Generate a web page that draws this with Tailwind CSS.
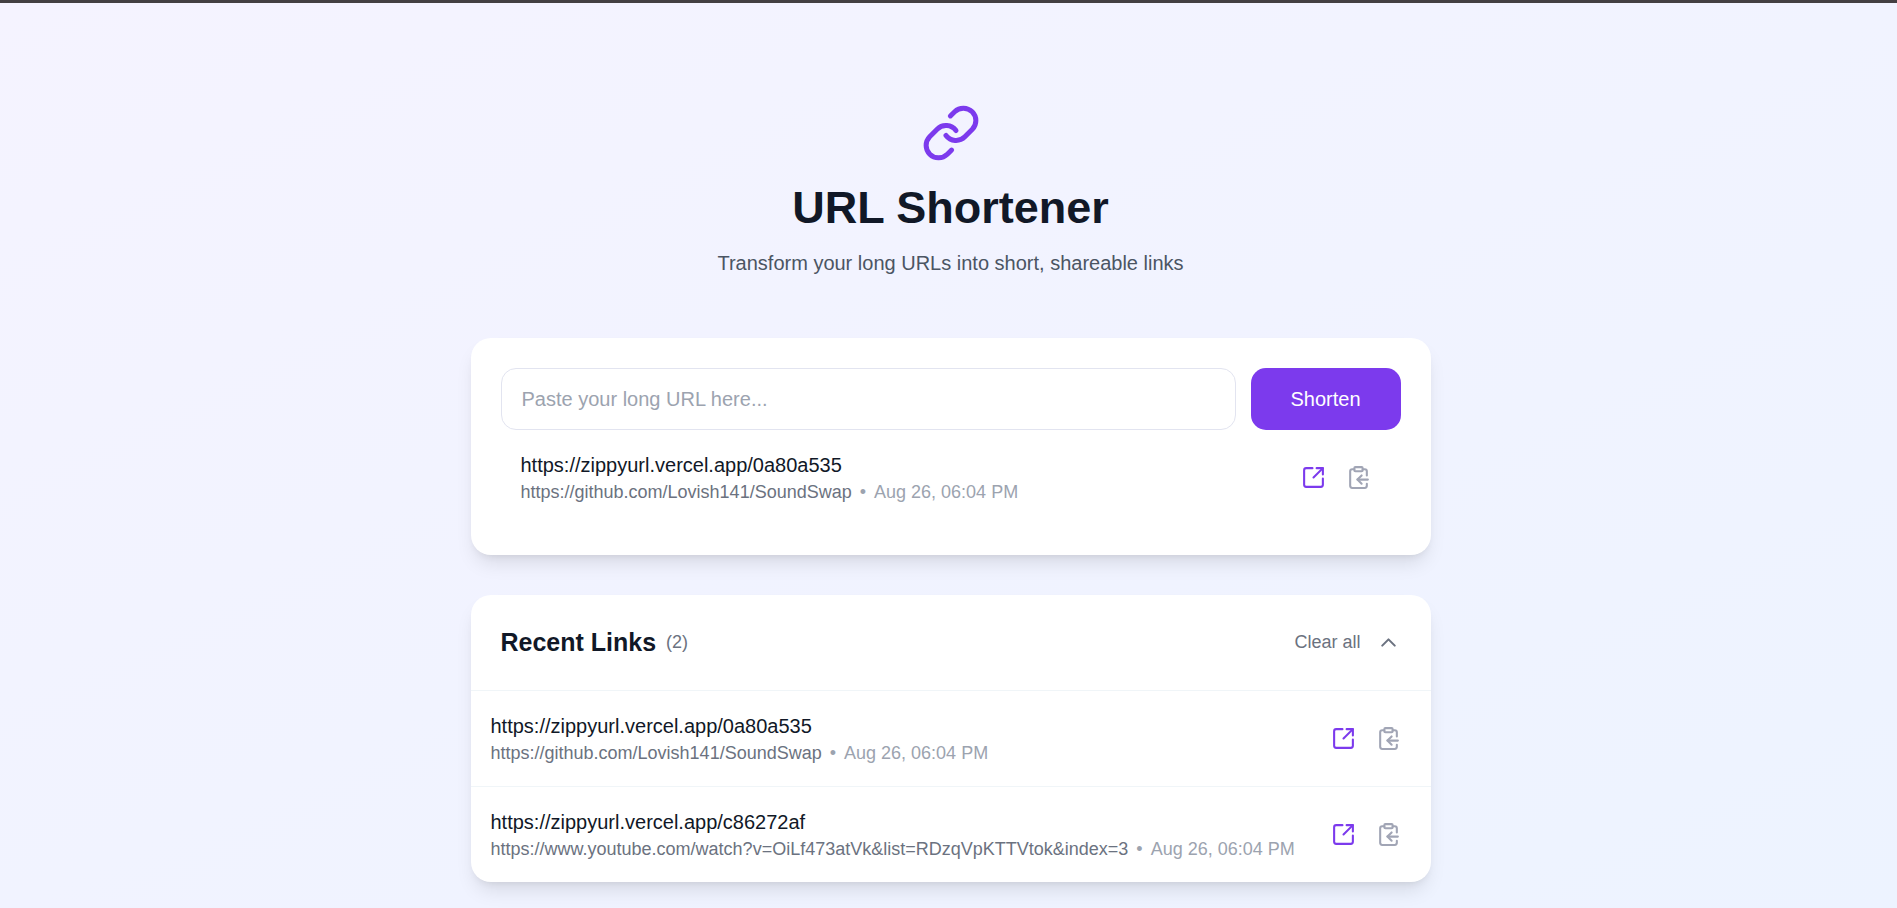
<!DOCTYPE html>
<html lang="en">
<head>
  <meta charset="UTF-8" />
  <meta name="viewport" content="width=device-width, initial-scale=1.0" />
  <title>URL Shortener</title>
  <script src="https://cdn.jsdelivr.net/npm/@tailwindcss/browser@4"></script>
</head>
<body class="font-['Liberation_Sans',Arial,sans-serif] text-[20px] leading-[30px] text-[#111827]">

<!-- Shared icons -->
<svg class="hidden">
  <symbol id="icon-open" viewBox="0 0 24 24" fill="none" stroke="currentColor" stroke-width="2" stroke-linecap="round" stroke-linejoin="round">
    <path d="M21 13v6a2 2 0 0 1-2 2H5a2 2 0 0 1-2-2V5a2 2 0 0 1 2-2h6" />
    <path d="m21 3-9 9" />
    <path d="M15 3h6v6" />
  </symbol>
  <symbol id="icon-copy" viewBox="0 0 24 24" fill="none" stroke="currentColor" stroke-width="2" stroke-linecap="round" stroke-linejoin="round">
    <rect width="8" height="4" x="8" y="2" rx="1" ry="1" />
    <path d="M8 4H6a2 2 0 0 0-2 2v14a2 2 0 0 0 2 2h12a2 2 0 0 0 2-2v-2" />
    <path d="M16 4h2a2 2 0 0 1 2 2v4" />
    <path d="M21 14H11" />
    <path d="m15 10-4 4 4 4" />
  </symbol>
</svg>

<div class="min-h-screen border-t-3 border-[#433f42] bg-linear-to-br/srgb from-[#f5f3ff] to-[#edf3ff] pt-25 pb-6 pl-1">
  <main class="max-w-[960px] mx-auto">

    <!-- Header -->
    <header class="flex flex-col items-center text-center mb-15">
      <svg class="size-15 mb-5 text-[#7c3aed]" viewBox="0 0 24 24" fill="none" stroke="currentColor" stroke-width="2" stroke-linecap="round" stroke-linejoin="round">
        <path d="M10 13a5 5 0 0 0 7.54.54l3-3a5 5 0 0 0-7.07-7.07l-1.72 1.71" />
        <path d="M14 11a5 5 0 0 0-7.54-.54l-3 3a5 5 0 0 0 7.07 7.07l1.71-1.71" />
      </svg>
      <h1 class="text-[45px] leading-[50px] font-bold mb-[15px]">URL Shortener</h1>
      <p class="text-[#4b5563]">Transform your long URLs into short, shareable links</p>
    </header>

    <!-- Shorten form -->
    <section class="bg-white rounded-[20px] shadow-[0_12px_19px_-4px_rgba(0,0,0,0.1),0_5px_8px_-5px_rgba(0,0,0,0.1)] p-[30px] mb-10">
      <form class="flex gap-[15px]" onsubmit="return false">
        <input type="url" aria-label="Long URL" placeholder="Paste your long URL here..." class="flex-1 min-w-0 px-5 py-[15px] border border-[#e2e4f0] rounded-[15px] placeholder:text-[#9ca3af]" />
        <button type="submit" class="w-[150px] bg-[#7c3aed] hover:bg-[#6d28d9] text-white py-4 rounded-[15px]">Shorten</button>
      </form>
      <div class="flex items-center justify-between p-5">
        <div class="min-w-0">
          <a href="#" class="block">https://zippyurl.vercel.app/0a80a535</a>
          <div class="flex gap-2 text-lg leading-[25px] text-[#9ca3af]">
            <span class="text-[#6b7280]">https://github.com/Lovish141/SoundSwap</span>
            <span>•</span>
            <span>Aug 26, 06:04 PM</span>
          </div>
        </div>
        <div class="flex">
          <a href="#" aria-label="Open link" class="p-[10px] text-[#7c3aed]"><svg class="size-[25px]"><use href="#icon-open" /></svg></a>
          <button type="button" aria-label="Copy link" class="p-[10px] text-[#a1a5b5]"><svg class="size-[25px]"><use href="#icon-copy" /></svg></button>
        </div>
      </div>
    </section>

    <!-- Recent links -->
    <section class="bg-white rounded-[20px] shadow-[0_12px_19px_-4px_rgba(0,0,0,0.1),0_5px_8px_-5px_rgba(0,0,0,0.1)]">
      <div class="flex items-center justify-between p-[30px]">
        <div class="flex items-center gap-[10px]">
          <h2 class="text-[25px] leading-[35px] font-bold">Recent Links</h2>
          <span class="text-lg leading-[25px] text-[#6b7280]">(2)</span>
        </div>
        <div class="flex items-center gap-[15px] text-[#6b7280]">
          <button type="button" class="text-lg leading-[25px]">Clear all</button>
          <button type="button" aria-label="Collapse">
            <svg class="size-[25px]" viewBox="0 0 24 24" fill="none" stroke="currentColor" stroke-width="2" stroke-linecap="round" stroke-linejoin="round"><path d="m18 15-6-6-6 6" /></svg>
          </button>
        </div>
      </div>
      <ul>
        <li class="flex items-center justify-between p-5 border-t border-[#f0f5f8]">
          <div class="min-w-0">
            <a href="#" class="block">https://zippyurl.vercel.app/0a80a535</a>
            <div class="flex gap-2 text-lg leading-[25px] text-[#9ca3af]">
              <span class="text-[#6b7280]">https://github.com/Lovish141/SoundSwap</span>
              <span>•</span>
              <span>Aug 26, 06:04 PM</span>
            </div>
          </div>
          <div class="flex">
            <a href="#" aria-label="Open link" class="p-[10px] text-[#7c3aed]"><svg class="size-[25px]"><use href="#icon-open" /></svg></a>
            <button type="button" aria-label="Copy link" class="p-[10px] text-[#a1a5b5]"><svg class="size-[25px]"><use href="#icon-copy" /></svg></button>
          </div>
        </li>
        <li class="flex items-center justify-between p-5 border-t border-[#f0f5f8]">
          <div class="min-w-0">
            <a href="#" class="block">https://zippyurl.vercel.app/c86272af</a>
            <div class="flex gap-2 text-lg leading-[25px] text-[#9ca3af]">
              <span class="text-[#6b7280]">https://www.youtube.com/watch?v=OiLf473atVk&amp;list=RDzqVpKTTVtok&amp;index=3</span>
              <span>•</span>
              <span>Aug 26, 06:04 PM</span>
            </div>
          </div>
          <div class="flex">
            <a href="#" aria-label="Open link" class="p-[10px] text-[#7c3aed]"><svg class="size-[25px]"><use href="#icon-open" /></svg></a>
            <button type="button" aria-label="Copy link" class="p-[10px] text-[#a1a5b5]"><svg class="size-[25px]"><use href="#icon-copy" /></svg></button>
          </div>
        </li>
      </ul>
    </section>

  </main>
</div>

</body>
</html>
